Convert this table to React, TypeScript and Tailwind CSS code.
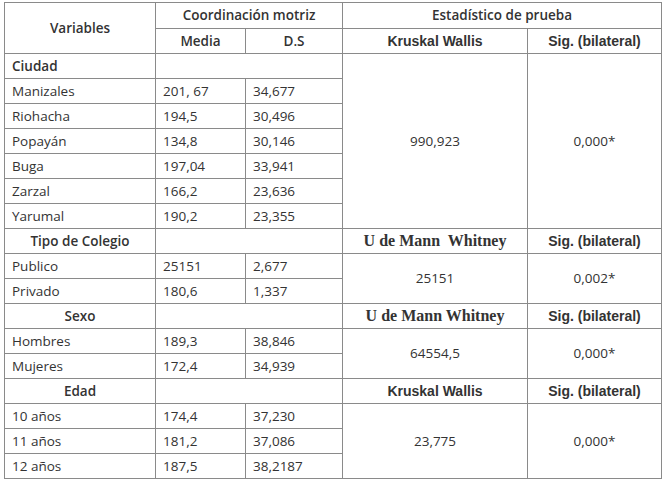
import React from "react";

const line = "border border-[#8a8a8a]";
const td = `${line} px-[7px] h-[25px] p-0 align-middle`;
const arial = "font-['Liberation_Sans',sans-serif] text-[14px]";
const serif = "font-['Liberation_Serif',serif] text-[16px]";

type Section = {
  label: string;
  center: boolean;
  head1: string;
  head2: string;
  head1Font?: string;
  value: string;
  sig: string;
  rows: [string, string, string][];
};

const sections: Section[] = [
  {
    label: "Ciudad",
    center: false,
    head1: "",
    head2: "",
    value: "990,923",
    sig: "0,000*",
    rows: [
      ["Manizales", "201, 67", "34,677"],
      ["Riohacha", "194,5", "30,496"],
      ["Popayán", "134,8", "30,146"],
      ["Buga", "197,04", "33,941"],
      ["Zarzal", "166,2", "23,636"],
      ["Yarumal", "190,2", "23,355"],
    ],
  },
  {
    label: "Tipo de Colegio",
    center: true,
    head1: "U de Mann  Whitney",
    head2: "Sig. (bilateral)",
    head1Font: serif,
    value: "25151",
    sig: "0,002*",
    rows: [
      ["Publico", "25151", "2,677"],
      ["Privado", "180,6", "1,337"],
    ],
  },
  {
    label: "Sexo",
    center: true,
    head1: "U de Mann Whitney",
    head2: "Sig. (bilateral)",
    head1Font: serif,
    value: "64554,5",
    sig: "0,000*",
    rows: [
      ["Hombres", "189,3", "38,846"],
      ["Mujeres", "172,4", "34,939"],
    ],
  },
  {
    label: "Edad",
    center: true,
    head1: "Kruskal Wallis",
    head2: "Sig. (bilateral)",
    head1Font: arial,
    value: "23,775",
    sig: "0,000*",
    rows: [
      ["10 años", "174,4", "37,230"],
      ["11 años", "181,2", "37,086"],
      ["12 años", "187,5", "38,2187"],
    ],
  },
];

export default function App() {
  return (
    <div className="w-[665px] h-[481px] bg-white pt-[2px] pl-[4px] font-['Open_Sans',sans-serif] text-[13.5px] text-[#333333]">
      <table className="border-collapse table-fixed w-[657px]">
        <colgroup>
          <col className="w-[151px]" />
          <col className="w-[90px]" />
          <col className="w-[97px]" />
          <col className="w-[185px]" />
          <col className="w-[134px]" />
        </colgroup>
        <tbody>
          <tr className="h-[26px]">
            <td rowSpan={2} className={`${line} text-center font-semibold`}>Variables</td>
            <td colSpan={2} className={`${line} text-center font-semibold`}>Coordinación motriz</td>
            <td colSpan={2} className={`${line} text-center font-semibold`}>Estadístico de prueba</td>
          </tr>
          <tr className="h-[25px]">
            <td className={`${line} text-center font-semibold`}>Media</td>
            <td className={`${line} text-center font-semibold`}>D.S</td>
            <td className={`${line} text-center font-bold ${arial}`}>Kruskal Wallis</td>
            <td className={`${line} text-center font-bold ${arial}`}>Sig. (bilateral)</td>
          </tr>
          {sections.map((s, si) => (
            <React.Fragment key={s.label}>
              <tr className="h-[25px]">
                <td className={`${td} font-semibold ${s.center ? "text-center" : "text-left"}`}>{s.label}</td>
                <td colSpan={2} className={td}></td>
                {si === 0 ? (
                  <>
                    <td rowSpan={s.rows.length + 1} className={`${td} text-center`}>{s.value}</td>
                    <td rowSpan={s.rows.length + 1} className={`${td} text-center`}>{s.sig}</td>
                  </>
                ) : (
                  <>
                    <td className={`${td} text-center font-bold whitespace-pre ${s.head1Font ?? ""}`}>{s.head1}</td>
                    <td className={`${td} text-center font-bold ${arial}`}>{s.head2}</td>
                  </>
                )}
              </tr>
              {s.rows.map((r, ri) => (
                <tr key={r[0]} className="h-[25px]">
                  <td className={td}>{r[0]}</td>
                  <td className={td}>{r[1]}</td>
                  <td className={td}>{r[2]}</td>
                  {si !== 0 && ri === 0 && (
                    <>
                      <td rowSpan={s.rows.length} className={`${td} text-center`}>{s.value}</td>
                      <td rowSpan={s.rows.length} className={`${td} text-center`}>{s.sig}</td>
                    </>
                  )}
                </tr>
              ))}
            </React.Fragment>
          ))}
        </tbody>
      </table>
    </div>
  );
}
